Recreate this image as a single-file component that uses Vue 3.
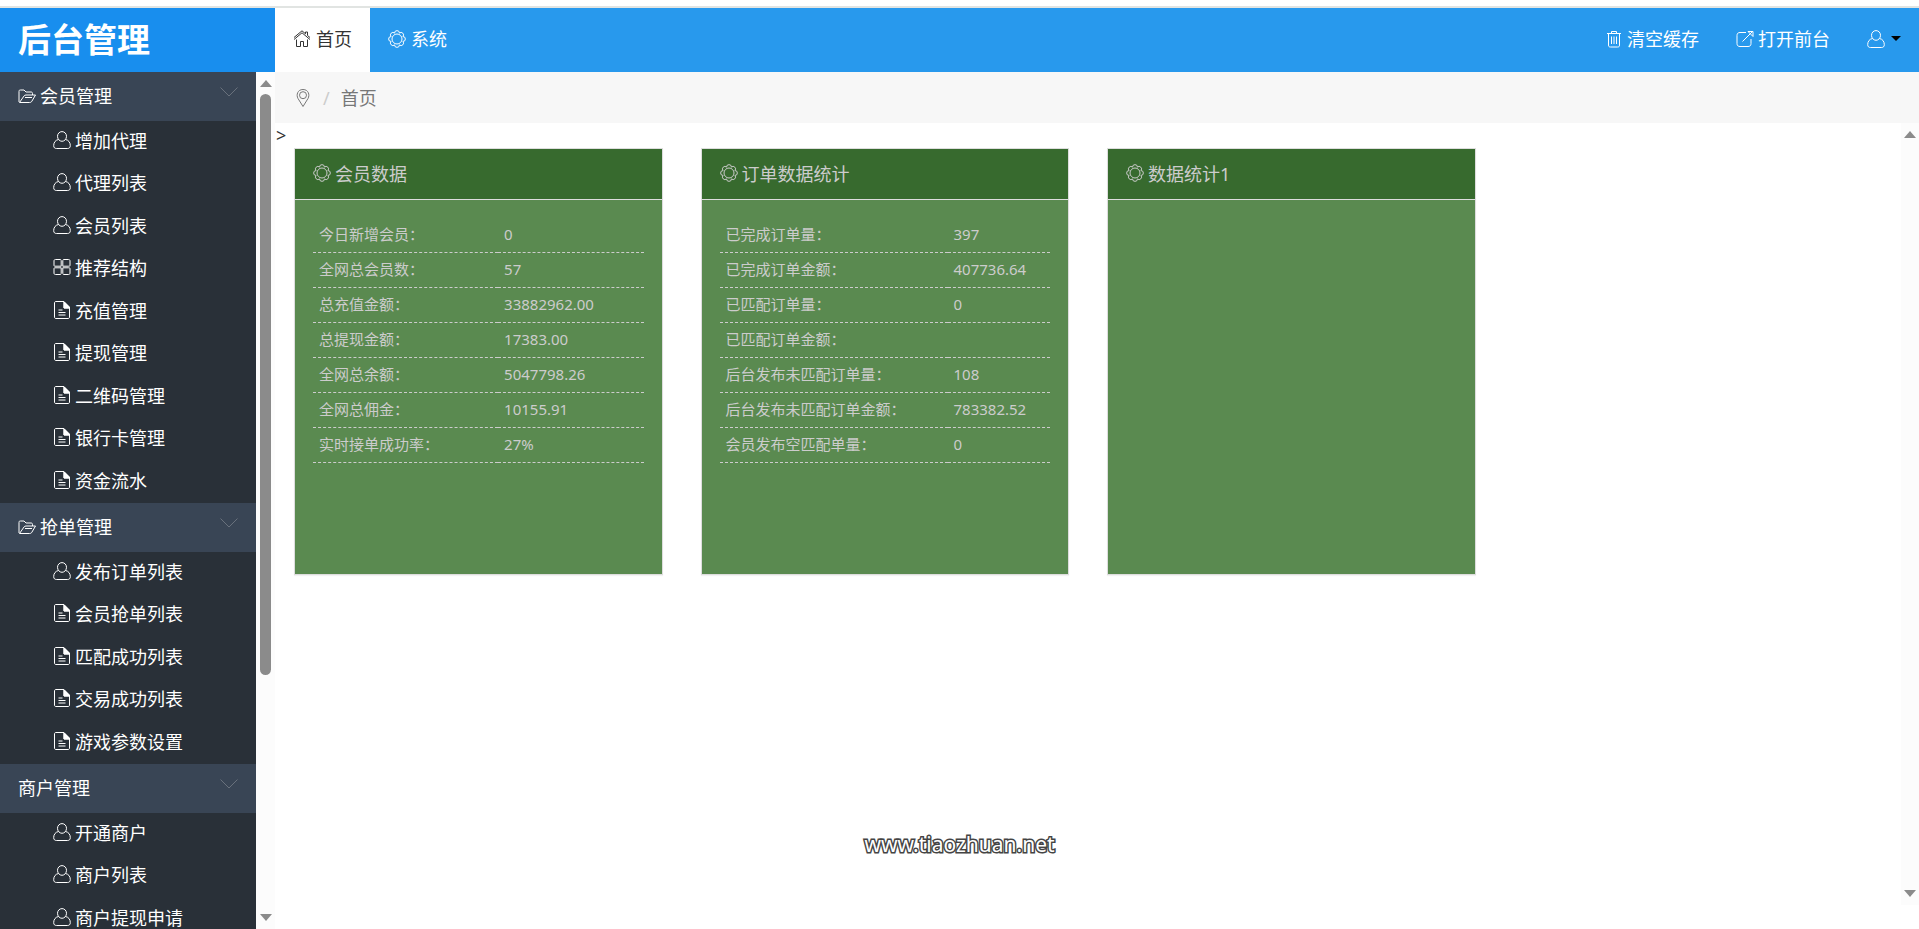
<template>
  <div class="admin">
    <header class="topbar">
      <h1 class="logo">后台管理</h1>
      <nav class="nav">
        <a v-for="tab in tabs" :key="tab.text" href="#" class="nav-link" :class="{ active: tab.text === activeTab }"
           @click.prevent="activeTab = tab.text">
          <svg class="icon" viewBox="0 0 18 18"><path :d="icons[tab.icon]" /></svg>
          <span>{{ tab.text }}</span>
        </a>
      </nav>
      <div class="nav nav-right">
        <a v-for="tool in tools" :key="tool.text" href="#" class="nav-link">
          <svg class="icon" viewBox="0 0 18 18"><path :d="icons[tool.icon]" /></svg>
          <span>{{ tool.text }}</span>
        </a>
        <button type="button" class="nav-link" aria-label="user">
          <svg class="icon" viewBox="0 0 18 18"><path :d="icons.user" /></svg>
          <span class="caret"></span>
        </button>
      </div>
    </header>

    <div class="body">
      <aside class="sidebar">
        <div class="menu">
          <section v-for="group in menu" :key="group.title">
            <button type="button" class="menu-title">
              <svg v-if="group.icon" class="icon" viewBox="0 0 18 18"><path :d="icons[group.icon]" /></svg>
              <span>{{ group.title }}</span>
              <svg class="icon chevron" viewBox="0 0 18 18"><path :d="icons.down" /></svg>
            </button>
            <ul class="menu-list">
              <li v-for="item in group.items" :key="item[1]">
                <a href="#">
                  <svg class="icon" viewBox="0 0 18 18">
                    <path :d="icons[item[0]]" />
                    <path v-if="item[0] === 'file'" class="fold" d="M11 1v6h6z" />
                  </svg>
                  <span>{{ item[1] }}</span>
                </a>
              </li>
            </ul>
          </section>
        </div>
        <div class="scrollbar">
          <span class="arrow up"></span>
          <div class="track">
            <div class="thumb" :style="{ height: thumbSize + '%' }"></div>
          </div>
          <span class="arrow down"></span>
        </div>
      </aside>

      <main class="main">
        <div class="breadcrumb">
          <svg class="icon" viewBox="0 0 18 18"><path :d="icons.pin" /></svg>
          <span class="slash">/</span>
          <span>{{ activeTab }}</span>
        </div>
        <div class="frame">
          <div class="content">
            <div class="stray">&gt;</div>
            <div class="row">
              <div v-for="panel in panels" :key="panel.title" class="col">
                <section class="panel">
                  <h2 class="panel-title">
                    <svg class="icon" viewBox="0 0 18 18"><path :d="icons.gear" /></svg>
                    <span>{{ panel.title }}</span>
                  </h2>
                  <div class="panel-body">
                    <table v-if="panel.rows.length">
                      <tbody>
                        <tr v-for="row in panel.rows" :key="row[0]">
                          <th scope="row" :style="{ width: panel.labelWidth + '%' }">{{ row[0] }}</th>
                          <td>{{ row[1] }}</td>
                        </tr>
                      </tbody>
                    </table>
                  </div>
                </section>
              </div>
            </div>
          </div>
          <div class="scrollbar">
            <span class="arrow up"></span>
            <div class="track"></div>
            <span class="arrow down"></span>
          </div>
        </div>
      </main>
    </div>

    <div class="watermark">www.tiaozhuan.net</div>
  </div>
</template>

<script setup>
import { ref } from 'vue'

const activeTab = ref('首页')
const thumbSize = 71.5

const tabs = [
  { icon: 'home', text: '首页' },
  { icon: 'gear', text: '系统' }
]

const tools = [
  { icon: 'trash', text: '清空缓存' },
  { icon: 'open', text: '打开前台' }
]

const menu = [
  {
    title: '会员管理',
    icon: 'folder',
    items: [
      ['user', '增加代理'],
      ['user', '代理列表'],
      ['user', '会员列表'],
      ['grid', '推荐结构'],
      ['file', '充值管理'],
      ['file', '提现管理'],
      ['file', '二维码管理'],
      ['file', '银行卡管理'],
      ['file', '资金流水']
    ]
  },
  {
    title: '抢单管理',
    icon: 'folder',
    items: [
      ['user', '发布订单列表'],
      ['file', '会员抢单列表'],
      ['file', '匹配成功列表'],
      ['file', '交易成功列表'],
      ['file', '游戏参数设置']
    ]
  },
  {
    title: '商户管理',
    items: [
      ['user', '开通商户'],
      ['user', '商户列表'],
      ['user', '商户提现申请']
    ]
  }
]

const panels = [
  {
    title: '会员数据',
    labelWidth: 56,
    rows: [
      ['今日新增会员：', '0'],
      ['全网总会员数：', '57'],
      ['总充值金额：', '33882962.00'],
      ['总提现金额：', '17383.00'],
      ['全网总余额：', '5047798.26'],
      ['全网总佣金：', '10155.91'],
      ['实时接单成功率：', '27%']
    ]
  },
  {
    title: '订单数据统计',
    labelWidth: 69,
    rows: [
      ['已完成订单量：', '397'],
      ['已完成订单金额：', '407736.64'],
      ['已匹配订单量：', '0'],
      ['已匹配订单金额：', ''],
      ['后台发布未匹配订单量：', '108'],
      ['后台发布未匹配订单金额：', '783382.52'],
      ['会员发布空匹配单量：', '0']
    ]
  },
  { title: '数据统计1', labelWidth: 50, rows: [] }
]

// scalloped ring: eight small lobes around an inner circle
function gearPath() {
  const points = []
  for (let i = 0; i < 8; i++) {
    const a = (i * 45 + 22.5) * Math.PI / 180
    points.push([(9 + 6.4 * Math.cos(a)).toFixed(2), (9 + 6.4 * Math.sin(a)).toFixed(2)])
  }
  let d = 'M' + points[7].join(' ')
  points.forEach(p => { d += ' A2.45 2.45 0 0 1 ' + p.join(' ') })
  return d + 'z M4 9a5 5 0 1 0 10 0a5 5 0 1 0 -10 0z'
}

const icons = {
  home: 'M1 9.500L9 2.800l8 6.700 M1 7.500L9 .8l3.500 3V2h2v3.500L17 7.500 M3.500 9.500v7h4V11.500h3v5h4V9.500',
  gear: gearPath(),
  trash: 'M2 3.500h14 M6.500 3.500V1.500h5v2 M3.500 3.500V15c0 1.500.5 2 2 2h7c1.500 0 2-.5 2-2V3.500 M6.500 6.500v7.500 M9 6.500v7.500 M11.500 6.500v7.500',
  open: 'M10 2.500H4C2 2.500 1 3.500 1 5.500v8c0 2 1 3 3 3h8c2 0 3-1 3-3V9 M6.500 11.500L16 2 M12 1.500h5v5z',
  user: 'M9 .6C6.500.6 4.500 2.600 4.500 5.300S6.500 10.300 9 10.300s4.500-2.300 4.500-5S11.500.6 9 .6z M5.500 8.500C2.500 9 .7 11.500.7 14.500c0 2.200 1 3 3 3h10.600c2 0 3-.8 3-3 0-3-1.800-5.500-4.800-6',
  folder: 'M1 15V4.500C1 3.200 1.500 3 2.500 3H6l2 2h5c1 0 1.500.5 1.500 1.500V8 M1.500 15.500L6 9c.5-.7 1-1 2-1h9.500l-3.500 6c-.6 1.100-1.200 1.500-2.500 1.500z M7 10.500h7',
  grid: 'M2.500 1.500h4.500c1 0 1.200.5 1.200 1.200v5.500H2C1.200 8.200 1 8 1 7V3c0-1 .5-1.500 1.500-1.500z M11 1.500h4.500c1 0 1.500.5 1.500 1.500v4c0 1-.2 1.200-1.200 1.200H9.800V2.700c0-.7.2-1.200 1.200-1.200z M2 9.800h6.200v5.500c0 .7-.2 1.200-1.200 1.200H2.500C1.500 16.500 1 16 1 15v-4c0-1 .2-1.200 1-1.200z M9.800 9.800h6c1 0 1.200.2 1.200 1.200v4c0 1-.5 1.500-1.500 1.500H11c-1 0-1.200-.5-1.200-1.200z',
  file: 'M11 .5H3C2 .5 1.500 1 1.500 2v14c0 1 .5 1.500 1.500 1.500h12c1 0 1.500-.5 1.500-1.500V6z M11 1v6h5.500 M5.500 9h4 M5.500 11.500h7 M5.500 14h7',
  pin: 'M9 17.500L4 9.500C2 6 3.500 .5 9 .5s7 5.500 5 9z M5.500 6.200a3.500 3.500 0 1 0 7 0a3.500 3.500 0 1 0 -7 0z',
  down: 'M.5 4.500L9 13l8.500-8.500'
}
</script>

<style>
body {
  margin: 0;
}
</style>

<style scoped>
.admin {
  height: 100vh;
  box-sizing: border-box;
  padding-top: 6px;
  display: flex;
  flex-direction: column;
  overflow: hidden;
  background: #fff;
  color: #333;
  font-family: "Noto Sans", "Noto Sans CJK SC", sans-serif;
  font-size: 18px;
  line-height: 24px;
}

a {
  color: inherit;
  text-decoration: none;
}

button {
  border: 0;
  margin: 0;
  background: none;
  color: inherit;
  font: inherit;
  cursor: pointer;
}

.icon {
  width: 18px;
  height: 18px;
  flex: none;
  fill: none;
  stroke: currentColor;
  stroke-width: 1;
}

.topbar {
  flex: none;
  display: flex;
  height: 64px;
  border-top: 2px solid #e1e4e2;
  background: #2899ed;
  color: #fff;
}

.logo {
  width: 275px;
  box-sizing: border-box;
  margin: 0;
  padding-left: 18px;
  background: #188eee;
  font-size: 33px;
  font-weight: 700;
  line-height: 64px;
}

.nav {
  display: flex;
}

.nav-right {
  margin-left: auto;
}

.nav-link {
  display: flex;
  align-items: center;
  gap: 5px;
  padding: 0 18px 3px;
}

.nav-right .nav-link {
  gap: 4px;
  padding: 0 18px 3px 19px;
}

.nav-link.active {
  background: #fff;
  color: #333;
}

.caret {
  margin-left: 2px;
  border: 5px solid transparent;
  border-top-color: #000;
  border-bottom: 0;
}

.body {
  flex: 1;
  min-height: 0;
  display: flex;
}

.sidebar {
  width: 275px;
  flex: none;
  display: flex;
}

.menu {
  flex: 1;
  overflow: hidden;
  background: #293038;
  color: #fff;
}

.menu-title {
  display: flex;
  align-items: center;
  gap: 4px;
  width: 100%;
  height: 49px;
  padding: 0 18px 2px;
  background: #394555;
}

.chevron {
  margin-left: auto;
  margin-bottom: 8px;
  color: #69717c;
}

.menu-list {
  margin: 0;
  padding: 0;
  list-style: none;
}

.menu-list a {
  display: flex;
  align-items: center;
  gap: 4px;
  box-sizing: border-box;
  height: 42px;
  padding: 0 0 3px 53px;
}

.menu-list li:nth-child(even) a {
  height: 43px;
}

.menu-list .icon {
  margin-bottom: 2px;
}

.fold {
  fill: currentColor;
}

.scrollbar {
  flex: none;
  width: 18px;
  box-sizing: border-box;
  padding: 8px 0;
  display: flex;
  flex-direction: column;
  align-items: center;
  gap: 7px;
  background: #fcfcfc;
}

.sidebar .scrollbar {
  width: 19px;
}

.track {
  flex: 1;
}

.thumb {
  width: 11px;
  border-radius: 6px;
  background: #8b8b8b;
}

.arrow {
  border: 6px solid transparent;
}

.arrow.up {
  border-top: 0;
  border-bottom: 7px solid #8b8b8b;
}

.arrow.down {
  border-bottom: 0;
  border-top: 7px solid #8b8b8b;
}

.main {
  flex: 1;
  min-width: 0;
  display: flex;
  flex-direction: column;
}

.breadcrumb {
  display: flex;
  align-items: center;
  gap: 11px;
  height: 51px;
  padding-left: 19px;
  background: #f7f7f7;
  color: #777;
}

.slash {
  color: #ccc;
}

.frame {
  flex: 1;
  display: flex;
  margin-bottom: 24px;
}

.content {
  flex: 1;
}

.stray {
  padding-left: 1px;
  line-height: 25px;
}

.row {
  display: grid;
  grid-template-columns: repeat(4, 1fr);
}

.col {
  padding: 0 19px;
}

.panel {
  border: 1px solid #ddd;
  background: #5a8a50;
  color: #ccc;
  box-shadow: 0 1px 1px rgba(0, 0, 0, 0.05);
}

.panel-title {
  display: flex;
  align-items: center;
  gap: 4px;
  height: 50px;
  margin: 0;
  padding: 0 18px;
  border-bottom: 1px solid #ddd;
  background: #376a2e;
  font-size: 18px;
  font-weight: 400;
}

.panel-title .icon {
  margin-bottom: 2px;
}

.panel-body {
  min-height: 374px;
  box-sizing: border-box;
  padding: 18px;
}

table {
  width: 100%;
  border-collapse: collapse;
  font-size: 15px;
  line-height: 22px;
}

th,
td {
  padding: 5px 6px 7px;
  border-bottom: 1px dashed #ccc;
  font-weight: 400;
  text-align: left;
  white-space: nowrap;
}

.watermark {
  position: absolute;
  left: 50%;
  bottom: 73px;
  transform: translateX(-50%);
  color: #fff;
  font-size: 21px;
  -webkit-text-stroke: 3px #444;
  paint-order: stroke fill;
}
</style>
